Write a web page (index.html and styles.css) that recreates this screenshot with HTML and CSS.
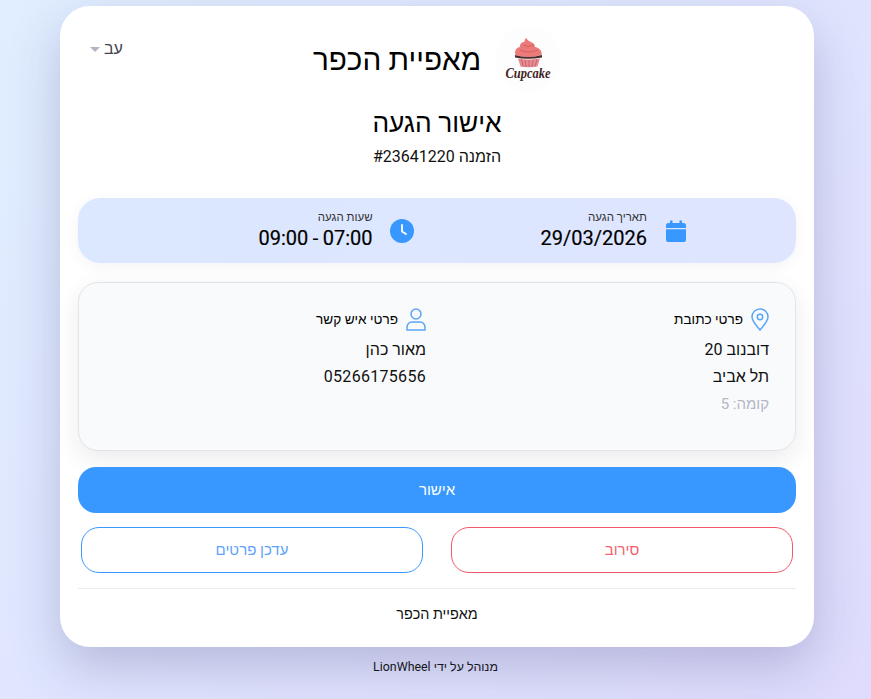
FILE: index.html
```html
<!DOCTYPE html>
<html lang="he" dir="rtl">
<head>
<meta charset="utf-8">
<title>אישור הגעה</title>
<link rel="stylesheet" href="styles.css">
</head>
<body>
<main class="card">
  <div class="lang"><span>עב</span><i class="caret"></i></div>
  <header class="brand">
    <svg class="logo" width="66" height="66" viewBox="0 0 66 66">
      <circle cx="33" cy="33" r="33" fill="#fefdfd"/>
      <path d="M20.500 29 C19 24 22 21.500 25 21 C24.500 18 27 16 29.500 15.800 C29.500 14 30 13 31.500 12 C32 14 34 15 36 16 C39 17 40 19.500 40 21 C44 21.500 47.500 25 46.500 29 Q33 33 20.500 29Z" fill="#ec7a78"/>
      <path d="M28 19 Q33 22 39 19 M25 24 Q33 28 43 24" fill="none" stroke="#cf5d60" stroke-width="0.900"/>
      <path d="M20 29 Q33 33 47 29 L47 31.500 Q33 34 20 31.500Z" fill="#4a2c2d"/>
      <path d="M23 32.500 Q33 34.500 45 32.500 L42.500 40.500 Q33 42 25.500 40.500Z" fill="#e88a8f"/>
      <path d="M26.500 33.500 L28 40.500 M30 34 L31 41 M34 34 L34 41 M38 34 L37 41 M42 33.500 L40 40.500" stroke="#b9606a" stroke-width="0.800"/>
      <text class="logo-text" x="33" y="51.500" text-anchor="middle" textLength="45" lengthAdjust="spacingAndGlyphs" dir="ltr">Cupcake</text>
    </svg>
    <h1>מאפיית הכפר</h1>
  </header>
  <h2 class="title">אישור הגעה</h2>
  <p class="order">הזמנה #23641220</p>

  <section class="band">
    <div class="slot">
      <svg class="ico" width="24" height="24" viewBox="0 0 24 24"><path fill="#3898ff" d="M6 1.500h2.500V4h7V1.500H18V4h1.500A2.500 2.500 0 0 1 22 6.500V9H2V6.500A2.500 2.500 0 0 1 4.500 4H6zM2 10.200h20V21a2 2 0 0 1-2 2H4a2 2 0 0 1-2-2z"/></svg>
      <div class="slot-text"><span class="slot-label">תאריך הגעה</span><strong class="slot-value" dir="ltr">29/03/2026</strong></div>
    </div>
    <div class="slot">
      <svg class="ico" width="24" height="24" viewBox="0 0 24 24"><circle cx="12" cy="12" r="12" fill="#3898ff"/><path d="M12 6v6.500l4 2.500" fill="none" stroke="#fff" stroke-width="1.800" stroke-linecap="round"/></svg>
      <div class="slot-text"><span class="slot-label">שעות הגעה</span><strong class="slot-value" dir="ltr">09:00 - 07:00</strong></div>
    </div>
  </section>

  <section class="details">
    <div class="col">
      <div class="col-head">
        <svg width="18" height="23" viewBox="0 0 18 23"><path d="M9 22C4.500 16.500 1 13 1 9a8 8 0 0 1 16 0C17 13 13.500 16.500 9 22Z" fill="none" stroke="#5aa5f8" stroke-width="1.500"/><circle cx="9" cy="9" r="2.700" fill="none" stroke="#5aa5f8" stroke-width="1.500"/></svg>
        <span>פרטי כתובת</span>
      </div>
      <p class="line">דובנוב 20</p>
      <p class="line">תל אביב</p>
      <p class="line muted">קומה: 5</p>
    </div>
    <div class="col">
      <div class="col-head">
        <svg width="20" height="23" viewBox="0 0 20 23"><circle cx="10" cy="6" r="5" fill="none" stroke="#5aa5f8" stroke-width="1.500"/><path d="M1 22v-3a5 5 0 0 1 5-5h8a5 5 0 0 1 5 5v3z" fill="none" stroke="#5aa5f8" stroke-width="1.500" stroke-linejoin="round"/></svg>
        <span>פרטי איש קשר</span>
      </div>
      <p class="line">מאור כהן</p>
      <p class="line phone">05266175656</p>
    </div>
  </section>

  <button class="btn btn-primary">אישור</button>
  <div class="actions">
    <button class="btn btn-reject">סירוב</button>
    <button class="btn btn-update">עדכן פרטים</button>
  </div>
  <footer class="card-foot">מאפיית הכפר</footer>
</main>
<p class="powered">מנוהל על ידי LionWheel</p>
</body>
</html>
```
FILE: styles.css
```css
* { box-sizing: border-box; }
html, body { height: 100%; }
body {
  margin: 0;
  padding-top: 6px;
  overflow: hidden;
  font-family: Roboto, "Liberation Sans", sans-serif;
  color: #0b0b12;
  background: linear-gradient(135deg, #e0eeff 0%, #dfdcfd 100%);
}
.card {
  position: relative;
  width: 754px;
  height: 641px;
  margin: 0 57px 0 60px;
  padding: 0 18px;
  background: #fff;
  border-radius: 30px;
  box-shadow: 0 20px 50px rgba(60, 60, 120, 0.25);
}
.lang {
  position: absolute;
  top: 33px;
  left: 30px;
  display: flex;
  align-items: center;
  gap: 4px;
  font-size: 16px;
  color: #44444e;
}
.caret {
  width: 0;
  height: 0;
  border-left: 5px solid transparent;
  border-right: 5px solid transparent;
  border-top: 5px solid #b4b4c0;
  margin-top: 1px;
}
.brand {
  display: flex;
  justify-content: center;
  align-items: center;
  gap: 14px;
  padding-top: 20px;
}
.logo { flex: none; }
.logo-text {
  font-family: "Liberation Serif", serif;
  font-style: italic;
  font-size: 14px;
  font-weight: 700;
  fill: #3d2526;
}
.brand h1 {
  margin: 0;
  font-size: 29.700px;
  font-weight: 400;
  color: #000;
}
.title {
  margin: 13px 0 0;
  text-align: center;
  font-size: 26.300px;
  line-height: 36px;
  font-weight: 500;
  color: #000;
}
.order {
  margin: 5px 0 0;
  text-align: center;
  font-size: 16px;
  line-height: 22px;
  color: #111;
}
.band {
  display: flex;
  gap: 127px;
  height: 65px;
  margin-top: 30px;
  padding-right: 108px;
  align-items: center;
  border-radius: 22px;
  background: linear-gradient(90deg, #dbe8ff, #dfe5ff);
  box-shadow: 0 4px 14px rgba(60, 60, 120, 0.06);
}
.slot { display: flex; align-items: center; gap: 17px; }
.ico { flex: none; }
.slot-text { display: flex; flex-direction: column; align-items: flex-start; padding-bottom: 2px; }
.slot-label { font-size: 11.500px; line-height: 16px; color: #333; }
.slot-value { font-size: 20px; line-height: 26px; font-weight: 400; word-spacing: -0.500px; color: #000; -webkit-text-stroke: 0.200px #000; }
.details {
  display: grid;
  grid-template-columns: 343px 1fr;
  height: 169px;
  margin-top: 19px;
  padding: 23px 26px 0 0;
  border: 1px solid #e2e4e8;
  border-radius: 20px;
  background: #f9fafc;
  box-shadow: 0 8px 24px rgba(30, 30, 60, 0.09);
}
.col-head {
  display: flex;
  align-items: center;
  gap: 8px;
  height: 26px;
  font-size: 13.600px;
  font-weight: 500;
  color: #000;
  margin-bottom: 4px;
}
.line {
  margin: 0;
  font-size: 16px;
  line-height: 27px;
  color: #111;
}
.phone { letter-spacing: 0.300px; }
.muted { color: #b3b7c6; font-size: 15px; line-height: 29px; }
.btn {
  display: block;
  font: inherit;
  font-size: 15px;
  height: 46px;
  border-radius: 18px;
  background: #fff;
  cursor: pointer;
}
.btn-primary {
  width: 100%;
  margin-top: 16px;
  border: 0;
  background: #3898ff;
  color: #fff;
}
.actions {
  display: flex;
  justify-content: space-between;
  padding: 0 3px;
  margin-top: 14px;
}
.actions .btn { width: 342px; }
.btn-reject { border: 1px solid #f4586c; color: #f4636f; }
.btn-update { border: 1px solid #3898ff; color: #5ea3fb; }
.card-foot {
  margin-top: 15px;
  padding-top: 16px;
  border-top: 1px solid #eaeaf0;
  text-align: center;
  font-size: 14.400px;
  line-height: 20px;
  color: #111;
}
.powered {
  margin: 12px 0 0;
  text-align: center;
  font-size: 12.400px;
  line-height: 16px;
  color: #111;
}
```
